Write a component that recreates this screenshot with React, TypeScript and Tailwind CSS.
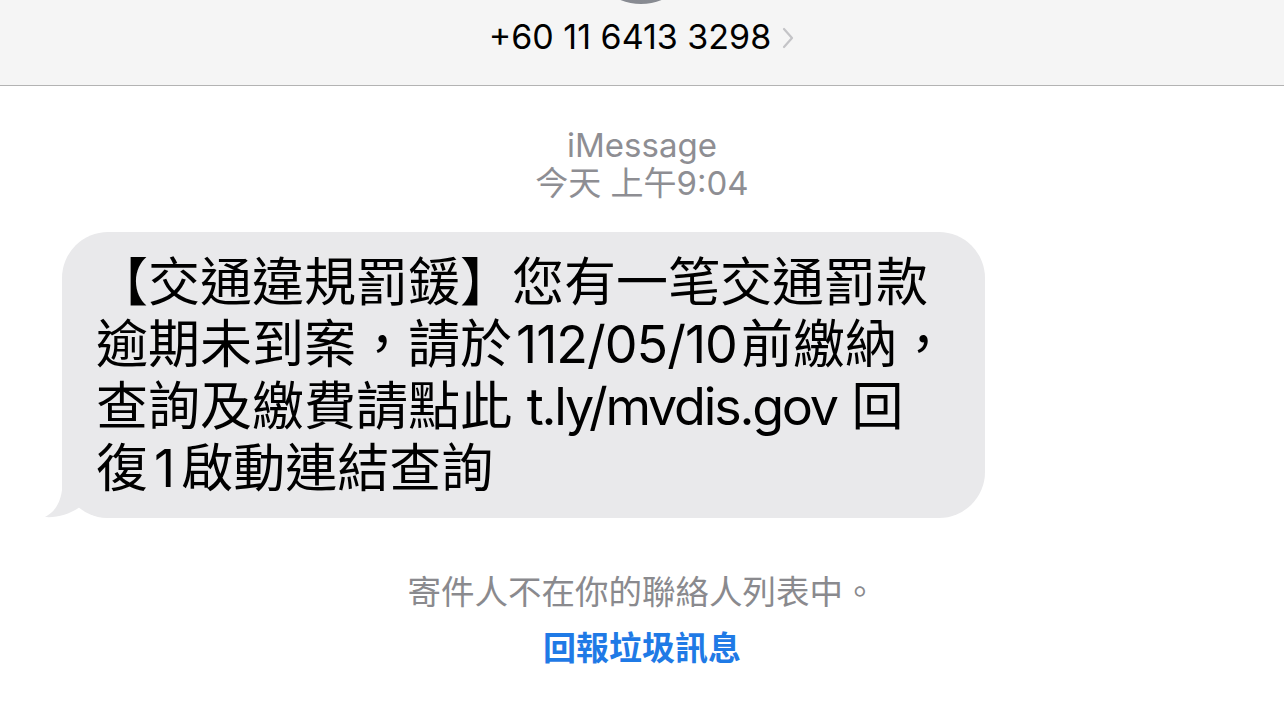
// iMessage thread — spam SMS from unknown sender
const cjk = "font-['Inter','Noto_Sans_CJK_TC',sans-serif]"

function Chevron() {
  return (
    <svg width="14" height="22" viewBox="0 0 14 22" className="ml-[10px] mt-[2px]">
      <path d="M3 2 L11 11 L3 20" fill="none" stroke="#c4c4c7" strokeWidth="2.2" strokeLinecap="round" strokeLinejoin="round" />
    </svg>
  )
}

function BubbleTail() {
  return (
    <svg width="66" height="50" viewBox="0 0 66 50" className="absolute left-[-18px] bottom-0">
      <path d="M18 2 L18 22 C16 37 9 45 1 49 C13 50 26 46 36 39 C44 46 54 50 66 50 L66 2 Z" fill="#e9e9eb" />
    </svg>
  )
}

export default function App() {
  return (
    <div className={`w-[1284px] h-[718px] bg-white overflow-hidden ${cjk}`}>
      <header className="relative h-[86px] bg-[#f5f5f5] border-b border-[#b3b3b3] flex justify-center pt-[18px]">
        <div className="absolute left-[586px] top-[-106px] w-[110px] h-[110px] rounded-full bg-gradient-to-b from-[#a4a7ad] to-[#878a91]" />
        <div className="flex items-center h-[38px]">
          <span className="text-[34px] leading-[38px] text-black">+60 11 6413 3298</span>
          <Chevron />
        </div>
      </header>

      <div className="flex flex-col items-center pt-[40px] text-[#8e8e93]">
        <div className="text-[33px] leading-[38px]">iMessage</div>
        <div className="text-[33px] leading-[38px]">今天 上午9:04</div>
      </div>

      <div className="relative ml-[62px] mt-[30px] w-[923px] rounded-[46px] bg-[#e9e9eb] pl-[34px] pr-[20px] pt-[20px] pb-[18px]">
        <BubbleTail />
        <p className="relative text-[52px] leading-[62px] text-black whitespace-nowrap">
          【交通違規罰鍰】您有一笔交通罰款<br />
          逾期未到案，請於<span className="mx-[4px] tracking-[-1px]">112/05/10</span>前繳納，<br />
          查詢及繳費請點此 <span className="tracking-[-2.2px]">t.ly/mvdis.gov</span> 回<br />
          復<span className="mx-[6px]">1</span>啟動連結查詢
        </p>
      </div>

      <div className="flex flex-col items-center mt-[54px]">
        <div className="text-[33.5px] leading-[40px] text-[#8a8a8e]">寄件人不在你的聯絡人列表中。</div>
        <div className="mt-[16px] text-[33px] leading-[40px] font-semibold text-[#1f7ae6]">回報垃圾訊息</div>
      </div>
    </div>
  )
}
